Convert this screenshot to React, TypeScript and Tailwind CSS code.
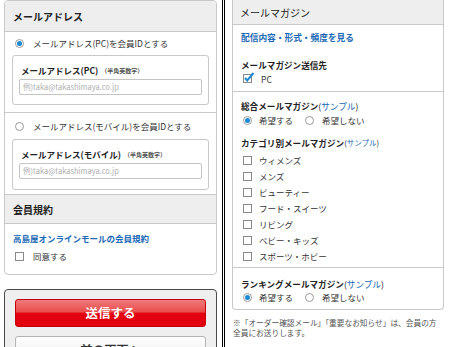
import * as React from "react";

const link = "text-[#1b69b6]";

function Radio({ checked }: { checked?: boolean }) {
  return (
    <span className="flex h-[9px] w-[9px] shrink-0 items-center justify-center rounded-full border border-[#9a9a9a] bg-white">
      {checked && <span className="h-[5px] w-[5px] rounded-full bg-[#1a8ad4]" />}
    </span>
  );
}

function Checkbox({ checked }: { checked?: boolean }) {
  if (checked) {
    return (
      <svg width="12" height="11" viewBox="0 0 12 11" className="-mt-[3px] shrink-0">
        <rect x="0.5" y="2.5" width="8" height="8" fill="#fff" stroke="#8a8a8a" />
        <path d="M2 6 L4.2 8.4 L10.5 1" fill="none" stroke="#1a8ad4" strokeWidth="2" />
      </svg>
    );
  }
  return <span className="h-[9px] w-[9px] shrink-0 border border-[#8a8a8a] bg-white" />;
}

function EmailBlock({ label, mt, pb }: { label: string; mt: string; pb: string }) {
  return (
    <div className={`${mt} ${pb} mx-[7px] rounded-[3px] border border-[#c8c8c8] bg-white px-[6px] pt-[8px]`}>
      <div className="flex h-[12px] items-center gap-[3px] pl-[2px]">
        <span className="text-[8.5px] font-bold text-[#222]">{label}</span>
        <span className="text-[6px] font-bold text-[#555]">（半角英数字）</span>
      </div>
      <div className="mt-[3px] flex h-[16px] items-center rounded-[2px] border border-[#c4c4c4] bg-white px-[3px] text-[7.5px] text-[#b0b0b0]">
        例)taka@takashimaya.co.jp
      </div>
    </div>
  );
}

function Sample({ small }: { small?: boolean }) {
  return (
    <span className={small ? "text-[7.5px] font-normal" : "font-normal"}>
      (<span className={link}>サンプル</span>)
    </span>
  );
}

function WishRadios() {
  return (
    <div className="flex h-[12px] items-center text-[8.5px]">
      <Radio checked />
      <span className="ml-[7px]">希望する</span>
      <span className="ml-[12px]">
        <Radio />
      </span>
      <span className="ml-[8px]">希望しない</span>
    </div>
  );
}

const categories = [
  "ウィメンズ",
  "メンズ",
  "ビューティー",
  "フード・スイーツ",
  "リビング",
  "ベビー・キッズ",
  "スポーツ・ホビー",
];

export default function App() {
  return (
    <div className="flex h-[347px] w-[450px] overflow-hidden bg-white font-['Noto_Sans_CJK_JP',sans-serif] text-[#333]">
      {/* left: member id */}
      <div className="w-[222px] shrink-0">
        <div className="ml-[4px] w-[213px] overflow-hidden rounded-[4px] border border-[#c8c8c8]">
          <div className="flex h-[31px] items-center border-b border-[#c8c8c8] bg-[#eeeeee] pl-[8px] text-[10px] font-bold text-[#222]">
            メールアドレス
          </div>
          <div className="border-b border-[#c8c8c8] pb-[7px] pt-[5px]">
            <div className="flex h-[12px] items-center gap-[9px] pl-[10px] text-[8.5px]">
              <Radio checked />
              <span>メールアドレス(PC)を会員IDとする</span>
            </div>
            <EmailBlock label="メールアドレス(PC)" mt="mt-[6px]" pb="pb-[9px]" />
          </div>
          <div className="pb-[4px] pt-[7px]">
            <div className="flex h-[12px] items-center gap-[9px] pl-[10px] text-[8.5px]">
              <Radio />
              <span>メールアドレス(モバイル)を会員IDとする</span>
            </div>
            <EmailBlock label="メールアドレス(モバイル)" mt="mt-[7px]" pb="pb-[10px]" />
          </div>
          <div className="flex h-[30px] items-center border-y border-[#c8c8c8] bg-[#eeeeee] pl-[8px] text-[10px] font-bold text-[#222]">
            会員規約
          </div>
          <div className="pb-[12px] pl-[8px] pt-[8px]">
            <div className={`flex h-[12px] items-center text-[8.5px] font-bold ${link}`}>
              高島屋オンラインモールの会員規約
            </div>
            <div className="mt-[6px] flex h-[12px] items-center gap-[9px] pl-[2px] text-[8.5px]">
              <Checkbox />
              <span>同意する</span>
            </div>
          </div>
        </div>
        <div className="ml-[4px] mt-[14px] w-[213px] rounded-[4px] border border-[#4a4a4a] bg-[#efefef] px-[10px] pt-[9px] pb-[10px]">
          <button className="flex h-[28px] w-full items-center justify-center rounded-[3px] border border-[#c4000c] bg-[linear-gradient(#f07a7a,#ea4d4d_45%,#e3000f_52%,#e3000f)] text-[12.5px] font-bold text-white">
            送信する
          </button>
          <button className="mt-[9px] flex h-[28px] w-full items-center justify-center rounded-[3px] border border-[#b4b4b4] bg-[linear-gradient(#ffffff,#e8e8e8)] text-[12px] font-bold text-[#333]">
            前の画面へ
          </button>
        </div>
      </div>

      {/* divider */}
      <div className="h-full w-[3px] shrink-0 border-x border-black bg-white" />

      {/* right: mail magazine */}
      <div className="w-[225px] shrink-0 pl-[7px]">
        <div className="w-[212px] rounded-b-[4px] border-x border-b border-[#c8c8c8]">
          <div className="flex h-[25px] items-center border-b border-[#c8c8c8] bg-[#eeeeee] pl-[7px] text-[10px] text-[#222]">
            メールマガジン
          </div>
          <div className="border-b border-[#c8c8c8] pb-[6px] pl-[8px] pt-[7px]">
            <div className={`flex h-[12px] items-center text-[8.7px] font-bold ${link}`}>
              配信内容・形式・頻度を見る
            </div>
            <div className="mt-[15px] flex h-[12px] items-center text-[8.6px] font-bold text-[#222]">
              メールマガジン送信先
            </div>
            <div className="mt-[2px] flex h-[12px] items-center gap-[6px] pl-[2px] text-[8.5px]">
              <Checkbox checked />
              <span>PC</span>
            </div>
          </div>
          <div className="border-b border-[#c8c8c8] pb-[3px] pl-[8px] pt-[8px]">
            <div className="flex h-[12px] items-center text-[8.6px] font-bold text-[#222]">
              総合メールマガジン
              <Sample />
            </div>
            <div className="mt-[2px] pl-[2px]">
              <WishRadios />
            </div>
            <div className="mt-[11px] flex h-[12px] items-center text-[8.6px] font-bold text-[#222]">
              カテゴリ別メールマガジン
              <Sample small />
            </div>
            <div className="mt-[3px] pl-[2px]">
              {categories.map((c) => (
                <div key={c} className="flex h-[16px] items-center gap-[7px] text-[8.5px]">
                  <Checkbox />
                  <span>{c}</span>
                </div>
              ))}
            </div>
          </div>
          <div className="pb-[6px] pl-[8px] pt-[10px]">
            <div className="flex h-[12px] items-center text-[8.6px] font-bold text-[#222]">
              ランキングメールマガジン
              <Sample />
            </div>
            <div className="mt-[1px] pl-[2px]">
              <WishRadios />
            </div>
          </div>
        </div>
        <p className="mt-[8px] pl-[1px] text-[7.7px] leading-[10px] text-[#555]">
          ※「オーダー確認メール」「重要なお知らせ」は、会員の方
          <br />
          全員にお送りします。
        </p>
      </div>
    </div>
  );
}
